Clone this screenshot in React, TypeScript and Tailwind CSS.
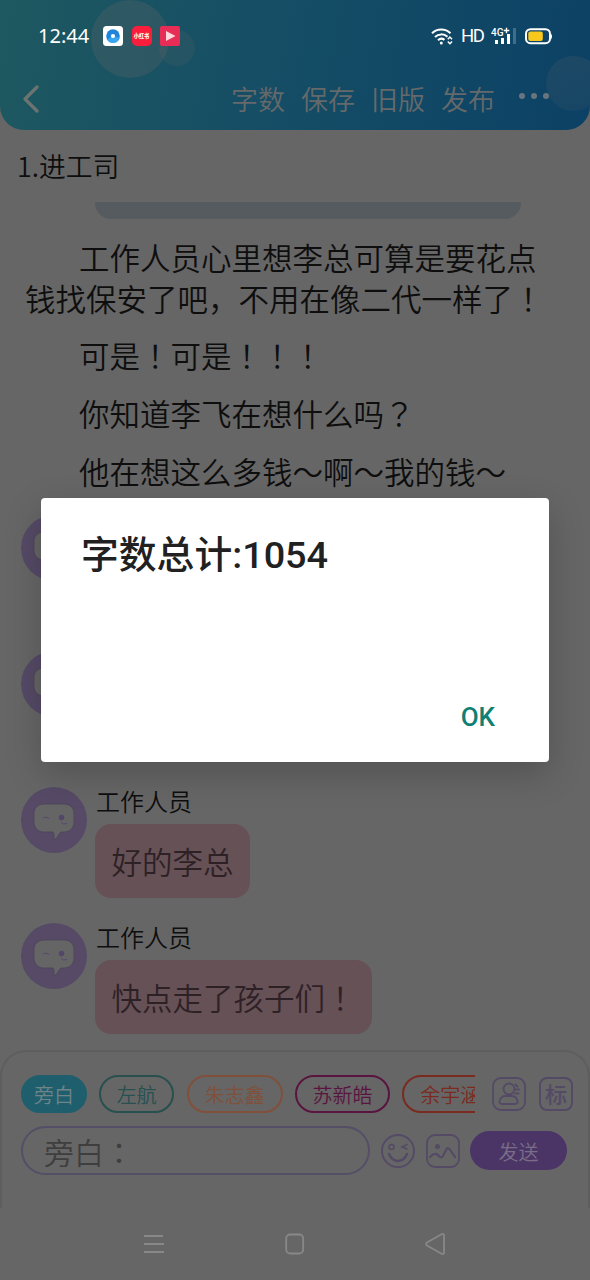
import { Fragment, type ReactNode } from "react";

const narration = [
  "工作人员心里想李总可算是要花点钱找保安了吧，不用在像二代一样了！",
  "可是！可是！！！",
  "你知道李飞在想什么吗？",
  "他在想这么多钱～啊～我的钱～",
];

const messages = [
  { name: "", text: "" },
  { name: "", text: "" },
  { name: "工作人员", text: "好的李总" },
  { name: "工作人员", text: "快点走了孩子们！" },
];

const roles = [
  { label: "旁白", style: "w-[66px] border-[#1f5f6d] bg-[#1f5f6d] text-[#6f8489]" },
  { label: "左航", style: "w-[75px] border-[#27504f] text-[#27504f]" },
  { label: "朱志鑫", style: "w-[96px] border-[#80503a] text-[#80503a]" },
  { label: "苏新皓", style: "w-[95px] border-[#59153f] text-[#59153f]" },
  { label: "余宇涵", style: "w-[96px] border-[#7a2a1f] text-[#7a2a1f]" },
];

// Full-width marks sit in the middle of their cell
function Copy({ children }: { children: string }) {
  return (
    <>
      {children.split(/([！？：])/).map((part, i) =>
        /[！？：]/.test(part) ? (
          <span key={i} className="font-['Noto_Sans_CJK_TC',sans-serif]">
            {part}
          </span>
        ) : (
          <Fragment key={i}>{part}</Fragment>
        ),
      )}
    </>
  );
}

function StatusBar() {
  return (
    <div className="flex h-[72px] items-center pr-[37px] pl-[38px] text-white">
      <span className="w-[65px] font-['Noto_Sans',sans-serif] text-[20px] leading-none">12:44</span>
      <div className="flex gap-[8.5px]">
        <svg width="20" height="20" viewBox="0 0 20 20">
          <rect width="20" height="20" rx="3.5" fill="#fff" />
          <circle cx="10" cy="10" r="6.8" fill="#2184db" />
          <path d="M4 13.5a6.8 6.8 0 0 0 12.6-1.8L10 10z" fill="#39a4ef" />
          <circle cx="10" cy="10" r="2.1" fill="#fff" />
        </svg>
        <div className="flex size-5 items-center justify-center rounded-[5px] bg-[#fb1d3c]">
          <span className="text-[5.2px] leading-none font-black whitespace-nowrap">小红书</span>
        </div>
        <svg width="20" height="20" viewBox="0 0 20 20">
          <rect width="20" height="20" rx="2" fill="#e72c55" />
          <path d="M6 5v10l9.5-5z" fill="#fbd9df" />
        </svg>
      </div>
      <div className="ml-auto flex items-center">
        <svg width="22" height="18" viewBox="0 0 22 18" fill="none" stroke="#fff" strokeWidth="2">
          <path d="M1 6.2a13.5 13.5 0 0 1 18.5 0M4 10a9 9 0 0 1 12.5-.2M7 13.2a5 5 0 0 1 6.5-.3" />
          <circle cx="10.3" cy="16" r="1.5" fill="#fff" stroke="none" />
          <path d="m16.8 12.3 2.1-2.2 2.1 2.2M16.8 14.5l2.1 2.2 2.1-2.2" strokeWidth="1.5" />
        </svg>
        <span className="ml-[8px] w-[30px] font-[Roboto,sans-serif] text-[18.5px] leading-none tracking-[-1.5px]">HD</span>
        <svg width="26" height="18" viewBox="0 0 26 18">
          <text x="0" y="8.5" fontSize="10" fontWeight="500" fontFamily="Roboto, sans-serif" fill="#fff">
            4G
          </text>
          <path d="M12.8 3.500h5.500M15.500.8v5.500" stroke="#fff" strokeWidth="1.400" />
          <path d="M4 13h3v4H4zM10 11h3v6h-3zM16 7h3v10h-3z" fill="#fff" />
          <path d="M22 1h3v16h-3z" fill="#3b6f8b" />
        </svg>
        <svg className="ml-[8px]" width="28" height="17" viewBox="0 0 28 17">
          <rect x="1" y="1.2" width="24" height="14" rx="4.5" fill="none" stroke="#fff" strokeWidth="2" />
          <path d="M26 5.5q2 3 0 6z" fill="#fff" />
          <rect x="3.3" y="3.5" width="14.5" height="9.5" rx="2" fill="#f8c91c" />
        </svg>
      </div>
    </div>
  );
}

function Header() {
  return (
    <header className="relative h-[130px] shrink-0 overflow-hidden rounded-b-[24px] bg-linear-[100deg] from-[#1e5860] via-[#154e65] via-45% to-[#0c4165]">
      <div className="absolute top-0 left-[91px] size-[78px] rounded-full bg-[#666]/27" />
      <div className="absolute top-[30px] left-[159px] size-[36px] rounded-full bg-[#666]/18" />
      <div className="absolute top-[56px] left-[546px] size-[55px] rounded-full bg-linear-to-b from-[#666]/18 to-[#666]/12" />
      <div className="relative">
        <StatusBar />
        <nav className="flex h-[54px] items-center pr-[41px] pl-[22px] text-[27px] leading-none font-[350] text-[#66696b]">
          <svg width="18" height="28" viewBox="0 0 18 28" fill="none" stroke="#6b7470" strokeWidth="3.2" strokeLinecap="round">
            <path d="M15 2 3 14l12 12" strokeLinejoin="round" />
          </svg>
          <div className="mb-[2px] ml-auto flex gap-[16px]">
            <span>字数</span>
            <span>保存</span>
            <span>旧版</span>
            <span>发布</span>
          </div>
          <div className="mb-[6px] ml-[24px] flex gap-[6px]">
            <i className="size-[6px] rounded-full bg-[#68757f]" />
            <i className="size-[6px] rounded-full bg-[#68757f]" />
            <i className="size-[6px] rounded-full bg-[#68757f]" />
          </div>
        </nav>
      </div>
    </header>
  );
}

function Avatar() {
  return (
    <svg className="shrink-0" width="66" height="66" viewBox="0 0 66 66">
      <circle cx="33" cy="33" r="33" fill="#564a66" />
      <path
        d="M23 17h20c6 0 10 4 10 9v9c0 6-4 10-10 10h-3c-3 2-3 5-6 8-2-3 0-6-2-8h-9c-6 0-10-4-10-10v-9c0-5 4-9 10-9z"
        fill="#656565"
        stroke="#4a4057"
        strokeWidth=".7"
      />
      <path d="M22 31q3-2.5 6 .5M40 35.500q2 2.500 6 1" fill="none" stroke="#564a6b" strokeWidth="1" />
      <circle cx="40.500" cy="30.500" r="2.700" fill="#52466a" />
    </svg>
  );
}

function Message({ name, text }: { name: string; text: string }) {
  return (
    <div className="flex h-[136px] shrink-0 items-start gap-2">
      <Avatar />
      {text && (
        <div>
          <p className="mb-[10px] pl-px text-[24px] leading-[27px] font-[350] text-[#0e0e0e]">{name}</p>
          <p className="flex h-[74px] items-center rounded-[16px] bg-[#665156] px-[16.5px] text-[30.5px] leading-none font-[350] text-[#2e2126]">
            <span>
              <Copy>{text}</Copy>
            </span>
          </p>
        </div>
      )}
    </div>
  );
}

function SquareIcon({ children }: { children: ReactNode }) {
  return (
    <svg width="34" height="34" viewBox="0 0 34 34" fill="none" stroke="#544a66" strokeWidth="1.800" strokeLinecap="round">
      <rect x="1" y="1" width="32" height="32" rx="8" />
      {children}
    </svg>
  );
}

function Composer() {
  return (
    <footer className="h-[158px] shrink-0 rounded-t-[26px] border-x-2 border-t-2 border-[#5e5e5e] pt-[23px] pl-[19px]">
      <div className="flex items-center">
        <div className="flex w-[454px] gap-[12.3px] overflow-hidden">
          {roles.map((role) => (
            <span
              key={role.label}
              className={`flex h-[38px] shrink-0 items-center justify-center rounded-full border-2 pt-[2px] text-[20px] leading-none font-[350] ${role.style}`}
            >
              {role.label}
            </span>
          ))}
        </div>
        <div className="ml-[17px] flex gap-[13px]">
          <SquareIcon>
            <circle cx="17" cy="12" r="5.500" />
            <path d="M10 27q-3 0-2.500-3 1.500-5 6-5h6q5 0 6 5 .5 3-2.500 3zM23.500 7.500l2 2M24 12.500h3M23 16.500h3.500" />
          </SquareIcon>
          <span className="flex size-[34px] items-center justify-center rounded-[8px] border-2 border-[#544a66] pb-[2px] text-[22px] leading-none font-medium text-[#544a66]">
            标
          </span>
        </div>
      </div>
      <div className="mt-[13px] flex items-center">
        <div className="flex h-[49px] w-[349px] items-center rounded-full border-2 border-[#544e66] pl-[21px] text-[30px] leading-none font-[350] text-[#3e3e3e]">
          <span>
            <Copy>旁白：</Copy>
          </span>
        </div>
        <svg className="ml-[11px]" width="34" height="34" viewBox="0 0 34 34" fill="none" stroke="#544a66" strokeWidth="1.900" strokeLinecap="round">
          <circle cx="17" cy="17" r="16" />
          <circle cx="10.500" cy="13" r="2.500" strokeWidth="1.500" />
          <path d="m26 10.500-5 2.500 5 2" strokeWidth="1.500" />
          <path d="M8 20q3 7 9 7t9-7" strokeWidth="2.500" />
        </svg>
        <div className="ml-[11px] flex">
          <SquareIcon>
            <circle cx="11.500" cy="12.500" r="2.500" fill="#544a66" stroke="none" />
            <path d="M4 23q4-5 8-2 3 4 5 1l3-6q2-4 5 1l4 6" strokeWidth="2.200" />
          </SquareIcon>
        </div>
        <span className="ml-[10px] flex h-[39px] w-[97px] items-center justify-center rounded-full bg-[#4b3466] pt-[2px] text-[20px] leading-none font-[350] text-[#7a6e86]">
          发送
        </span>
      </div>
    </footer>
  );
}

function SystemNav() {
  return (
    <div className="flex h-[72px] shrink-0 items-center justify-between pr-[144px] pl-[143px]">
      <svg width="22" height="22" viewBox="0 0 22 22" stroke="#888" strokeWidth="1.800">
        <path d="M1 3h19M1 11h20M1 19h20" />
      </svg>
      <svg width="22" height="22" viewBox="0 0 22 22" fill="none" stroke="#888" strokeWidth="1.800">
        <rect x="2.200" y="1.500" width="17" height="19" rx="4" />
      </svg>
      <svg width="22" height="24" viewBox="0 0 22 24" fill="none" stroke="#888" strokeWidth="1.800" strokeLinejoin="round">
        <path d="M18 2 3 10.500q-2 1.500 0 3L18 22q2 .5 2-1.500v-17Q20 1.500 18 2z" />
      </svg>
    </div>
  );
}

function CountDialog() {
  return (
    <div className="absolute inset-0 flex items-start justify-center pt-[498px]">
      <div className="flex h-[264px] w-[508px] flex-col justify-between rounded-[4px] bg-white pt-[35px] pr-[54px] pb-[30px] pl-[40px] shadow-[0_12px_36px_rgba(0,0,0,0.2)]">
        <h2 className="font-[Roboto,'Noto_Sans_CJK_SC',sans-serif] text-[37.8px] leading-[44px] font-medium text-[#212121]">
          字数总计:1054
        </h2>
        <button className="self-end font-[Roboto,sans-serif] text-[26px] leading-[30px] font-medium text-[#0f8074]">OK</button>
      </div>
    </div>
  );
}

export default function App() {
  return (
    <div className="relative flex h-[1280px] w-[590px] flex-col overflow-hidden bg-[#666] font-['Noto_Sans_CJK_SC',sans-serif]">
      <Header />
      <h1 className="flex h-[72px] shrink-0 items-center pl-[17px] text-[26.8px] leading-none font-[350] text-[#0e0e0e]">1.进工司</h1>
      <main className="flex h-[848px] shrink-0 flex-col overflow-hidden pl-[21px]">
        <div className="ml-[74px] h-[17px] w-[426px] shrink-0 rounded-b-[16px] bg-[#565b5f]" />
        <div className="mt-[18px] mb-[24px] flex w-[524px] flex-col gap-[17.3px] pl-[4px] text-[30.5px] leading-[40.5px] font-[350] text-[#0e0e0e]">
          {narration.map((line) => (
            <p key={line} className="indent-[54px]">
              <Copy>{line}</Copy>
            </p>
          ))}
        </div>
        {messages.map((message, i) => (
          <Message key={i} {...message} />
        ))}
      </main>
      <Composer />
      <SystemNav />
      <CountDialog />
    </div>
  );
}
